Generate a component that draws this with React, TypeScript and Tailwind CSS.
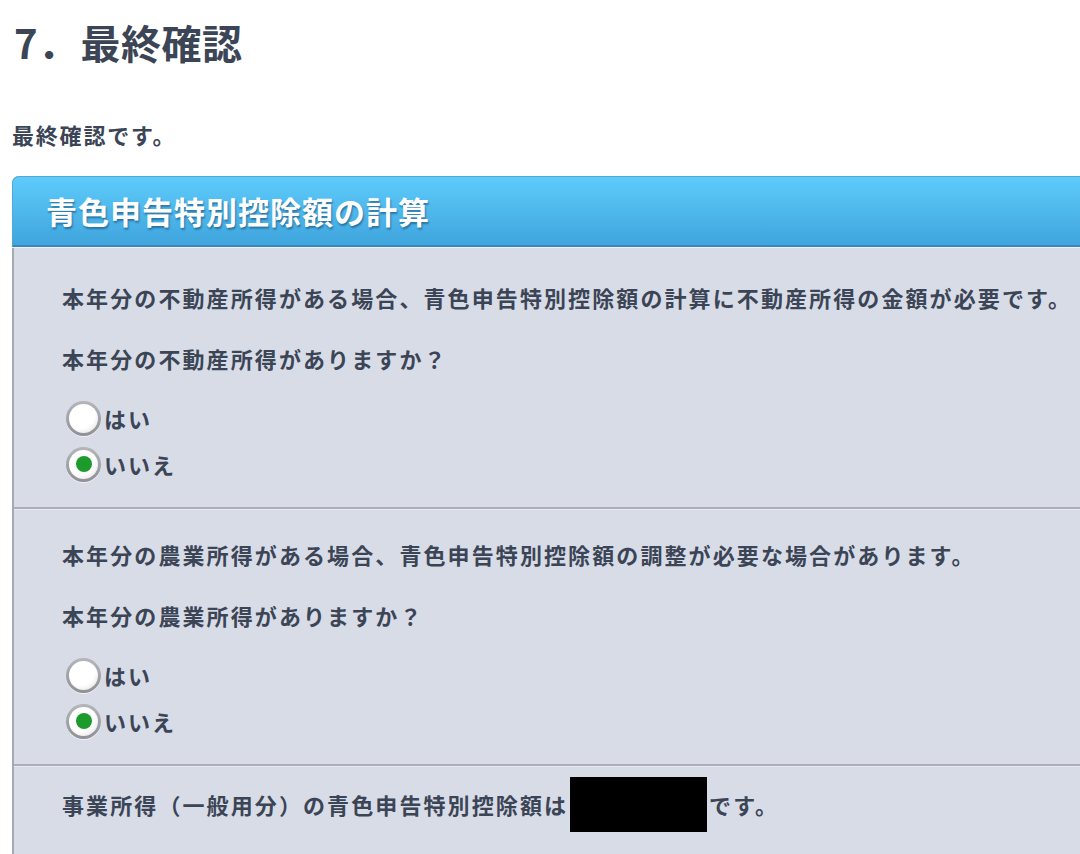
import React from "react";

const font = { fontFamily: '"Noto Sans CJK JP", "Noto Sans", sans-serif' };

function Radio({ label, checked }: { label: string; checked?: boolean }) {
  return (
    <label className="flex items-center h-[46px] pl-[4px]">
      <span className="w-[35px] h-[35px] rounded-full bg-gradient-to-b from-[#b4b6bb] to-[#8f9196] p-[3px] shadow-[0_1px_0_rgba(255,255,255,0.6)]">
        <span className="w-full h-full rounded-full flex items-center justify-center bg-[radial-gradient(circle_at_40%_35%,#ffffff_55%,#d9d9d9_100%)]">
          {checked && <span className="w-[16px] h-[16px] rounded-full bg-[#1c9a2b]" />}
        </span>
      </span>
      <span className="ml-[3px] text-[22px] font-bold text-[#3b4556] tracking-[2px]">{label}</span>
    </label>
  );
}

function Section({
  note,
  question,
  first,
}: {
  note: string;
  question: string;
  first?: boolean;
}) {
  return (
    <div
      className={
        "px-[48px] pb-[20px] border-b-2 border-[#abaeb8] shadow-[0_1px_0_#e9ebf1] " +
        (first ? "pt-[33px]" : "pt-[28px]")
      }
    >
      <p className="text-[22px] leading-[34px] font-bold text-[#3b4556] tracking-[2.1px]">{note}</p>
      <p className="mt-[27px] text-[22px] leading-[34px] font-bold text-[#3b4556] tracking-[2.1px]">{question}</p>
      <div className="mt-[20px]">
        <Radio label="はい" />
        <Radio label="いいえ" checked />
      </div>
    </div>
  );
}

export default function App() {
  return (
    <div className="w-[1080px] h-[854px] overflow-hidden bg-white" style={font}>
      <div className="pt-[20px] pl-[12px]">
        <h1 className="text-[40px] leading-[44px] font-bold text-[#3b4556] tracking-[0.5px]">
          <span className="ml-[2px]">7．</span>
          <span className="ml-[2px]">最終確認</span>
        </h1>
        <p className="mt-[56px] text-[22px] leading-[28px] font-bold text-[#3b4556] tracking-[1.8px]">
          最終確認です。
        </p>

        <div className="mt-[28px] w-[1120px] rounded-t-[7px] border-l-2 border-[#a6a9b3] bg-[#d8dce7]">
          <div className="h-[71px] -ml-[2px] rounded-t-[7px] border border-[#52a8d4] border-b-2 border-b-[#3a86b4] bg-gradient-to-b from-[#5ecbfb] to-[#3fa5dd] flex items-center pl-[33px] shadow-[0_1px_0_#eef1f6]">
            <h2 className="text-[31px] font-bold text-white tracking-[1px] [text-shadow:1px_2px_2px_rgba(0,40,80,0.45)]">
              青色申告特別控除額の計算
            </h2>
          </div>

          <Section
            first
            note="本年分の不動産所得がある場合、青色申告特別控除額の計算に不動産所得の金額が必要です。"
            question="本年分の不動産所得がありますか？"
          />
          <Section
            note="本年分の農業所得がある場合、青色申告特別控除額の調整が必要な場合があります。"
            question="本年分の農業所得がありますか？"
          />

          <div className="px-[48px] pt-[11px] pb-[30px]">
            <p className="flex items-center text-[22px] font-bold text-[#3b4556] tracking-[2.1px]">
              <span>事業所得（一般用分）の青色申告特別控除額は</span>
              <span className="inline-block w-[137px] h-[55px] bg-black mx-[2px]" />
              <span>です。</span>
            </p>
          </div>
        </div>
      </div>
    </div>
  );
}
